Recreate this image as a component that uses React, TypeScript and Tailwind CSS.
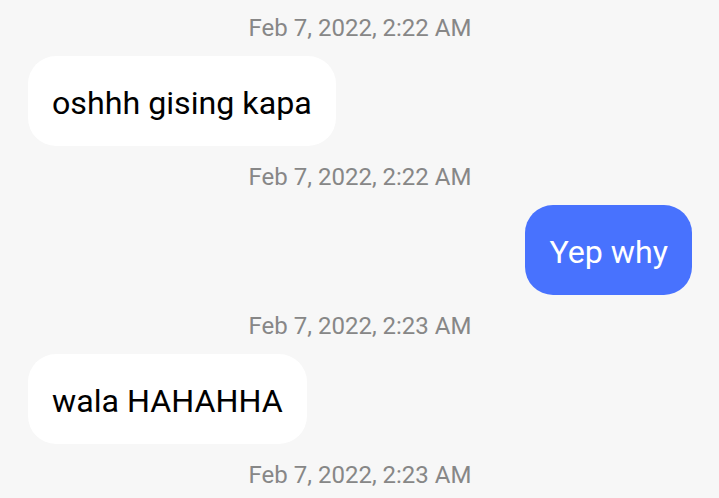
export default function App() {
  const items: { kind: "time" | "in" | "out"; text: string }[] = [
    { kind: "time", text: "Feb 7, 2022, 2:22 AM" },
    { kind: "in", text: "oshhh gising kapa" },
    { kind: "time", text: "Feb 7, 2022, 2:22 AM" },
    { kind: "out", text: "Yep why" },
    { kind: "time", text: "Feb 7, 2022, 2:23 AM" },
    { kind: "in", text: "wala HAHAHHA" },
    { kind: "time", text: "Feb 7, 2022, 2:23 AM" },
  ];

  return (
    <div
      className="w-[719px] h-[498px] overflow-hidden bg-[#f7f7f7] flex flex-col pl-[28px] pr-[27px] pt-[14px]"
      style={{ fontFamily: "Roboto, 'Noto Sans', sans-serif" }}
    >
      {items.map((it, i) =>
        it.kind === "time" ? (
          <div
            key={i}
            className={`text-center text-[24px] leading-[28px] text-[#878787] ${i === 0 ? "" : "mt-[17px]"}`}
          >
            {it.text}
          </div>
        ) : (
          <div
            key={i}
            className={`mt-[14px] flex ${it.kind === "out" ? "justify-end" : "justify-start"}`}
          >
            <div
              className={`rounded-[28px] px-[24px] pt-[28px] pb-[24px] text-[32.2px] leading-[38px] ${
                it.kind === "out" ? "bg-[#4872fe] text-white" : "bg-white text-black"
              }`}
            >
              {it.text}
            </div>
          </div>
        )
      )}
    </div>
  );
}
